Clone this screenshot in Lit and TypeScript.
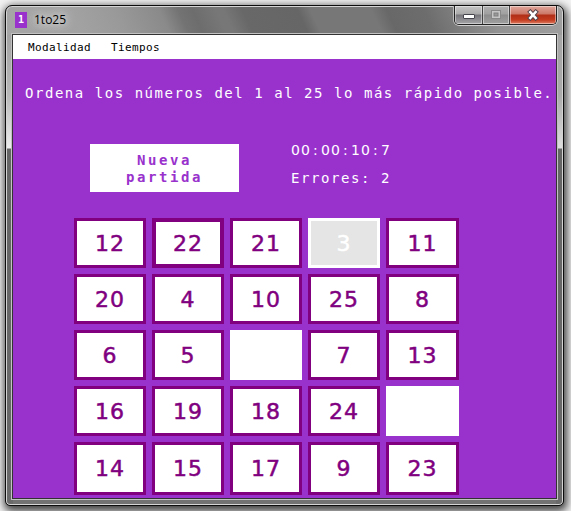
import { LitElement, html, css } from "lit";
import { customElement, property } from "lit/decorators.js";
import { classMap } from "lit/directives/class-map.js";

@customElement("number-tile")
class NumberTile extends LitElement {
  @property() value = "";
  @property() kind = "";
  static styles = css`
    :host { display: grid; }
    .tile {
      box-sizing: border-box;
      display: grid;
      place-items: center;
      background: #fff;
      border: 3px solid #800080;
      color: #800080;
      font: 22px/24px "DejaVu Sans", sans-serif;
      letter-spacing: 1px;
      padding: 1px 0 0 0;
      -webkit-text-stroke: 0.5px currentColor;
    }
    .focused { border-width: 4px; }
    .found { border-color: #fff; }
    .hover { background: #e5e5e5; border-color: #fff; color: #fff; }
  `;
  render() {
    return html`<div class=${classMap({
      tile: true,
      focused: this.kind === "focused",
      found: this.kind === "found",
      hover: this.kind === "hover",
    })}>${this.value}</div>`;
  }
}

@customElement("app-root")
class AppRoot extends LitElement {
  static styles = css`
    :host { display: block; }
    * { box-sizing: border-box; }
    .desk {
      width: 571px;
      height: 511px;
      padding: 5px 7px 5px 5px;
      overflow: hidden;
      background: #f2f2f2;
    }
    .window {
      position: relative;
      width: 559px;
      height: 501px;
      border: 1px solid #0c0c0c;
      border-radius: 7px 7px 5px 5px;
      box-shadow: inset 0 0 0 1px #d5d5d5, 1px 3px 9px 2px rgba(0, 0, 0, 0.75);
      background:
        linear-gradient(180deg, #a3a3a3 0, #b8b8b8 60px, #ededed 113px, #666 114px, #6a6a6a 100%) 0 29px / 7px 100% no-repeat,
        linear-gradient(180deg, #a5a5a5 0, #aaa 60px, #dedede 113px, #666 114px, #6a6a6a 100%) 100% 29px / 7px 100% no-repeat,
        linear-gradient(0deg, #727272 0, #727272 7px, transparent 7px),
        linear-gradient(65deg, #a6a6a6 0, #a2a2a2 70px, #999 110px, #8a8a8a 150px, #737373 167px, #6d6d6d 180px, #777 201px, #777 208px, #686868 225px, #666 275px, #777 287px, #777 342px, #686868 356px, #6d6d6d 390px, #939393 450px, #a0a0a0 100%) 0 0 / 100% 30px no-repeat,
        #777;
      padding: 1px 6px 5px;
    }
    .bar { height: 27px; display: flex; align-items: center; padding: 0 0 0 3px; }
    .logo {
      width: 12px;
      height: 16px;
      margin-top: -1px;
      background: #9932cc;
      color: #fff;
      font: bold 10px/16px "DejaVu Sans Mono", monospace;
      text-align: center;
    }
    .title {
      margin: -1px 0 0 7px;
      font: 12px/16px "Open Sans", sans-serif;
      color: #000;
      text-shadow: 0 0 6px #ddd, 0 0 10px #ddd, 0 0 12px #ddd;
    }
    .controls {
      position: absolute;
      left: 448px;
      top: 0;
      width: 103px;
      height: 19px;
      display: flex;
      border: 1px solid #222;
      border-top: 0;
      border-radius: 0 0 5px 5px;
      overflow: hidden;
      box-shadow: 0 1px 0 #d0d0d0, 1px 0 0 #d0d0d0, -1px 0 0 #bbb;
    }
    .control {
      display: grid;
      place-items: center;
      background: linear-gradient(#c4c4c4 0, #aaa 8px, #75757a 9px, #a5a5a8 100%);
      box-shadow: inset 0 0 0 1px rgba(255, 255, 255, 0.45);
      width: 28px;
      border-right: 1px solid #444;
    }
    .max { width: 27px; background: linear-gradient(#b0b0b0, #a0a0a0 8px, #8c8c8c 9px, #a0a0a0); }
    .close {
      width: 46px;
      border-right: 0;
      background: linear-gradient(#dfa79c 0, #cc7767 8px, #b02e17 9px, #c43c20 14px, #dd8065 100%);
    }
    svg { display: block; }
    .client {
      height: 465px;
      width: 545px;
      border: 1px solid #333;
      box-shadow: 0 0 0 1px #c2c2c2;
      background: #9932cc;
    }
    .menu {
      height: 24px;
      display: flex;
      gap: 20px;
      padding-left: 15px;
      background: #fff;
      color: #000;
      font: 11px/25px "DejaVu Sans Mono", monospace;
      letter-spacing: 0.38px;
    }
    .intro {
      padding: 24px 0 0 12px;
      white-space: nowrap;
      color: #fff;
      font: 14px/20px "DejaVu Sans Mono", monospace;
      letter-spacing: 1.54px;
    }
    .head { display: flex; padding: 41px 0 0 77px; gap: 52px; }
    .start {
      width: 149px;
      height: 48px;
      padding: 2px 0 0;
      border: 0;
      background: #fff;
      color: #9932cc;
      text-align: center;
      font: bold 14px/17px "DejaVu Sans Mono", monospace;
      letter-spacing: 2.57px;
    }
    .stats {
      display: grid;
      grid-template-rows: 28px 28px;
      margin-top: -8px;
      color: #fff;
      font: 14px/28px "DejaVu Sans Mono", monospace;
      letter-spacing: 1.57px;
    }
    .digits { font-family: "DejaVu Sans", sans-serif; letter-spacing: 1.09px; }
    .colon { display: inline-block; width: 10px; text-align: center; }
    .board {
      display: grid;
      grid-template-columns: repeat(4, 72px) 73px;
      grid-template-rows: repeat(4, 50px) 53px;
      gap: 6px;
      padding: 26px 0 0 61px;
    }
  `;

  private numbers = [
    "12", "22", "21", "3", "11",
    "20", "4", "10", "25", "8",
    "6", "5", "", "7", "13",
    "16", "19", "18", "24", "",
    "14", "15", "17", "9", "23",
  ];

  private kindOf(n: string) {
    if (n === "") return "found";
    if (n === "3") return "hover";
    return n === "22" ? "focused" : "";
  }

  render() {
    return html`
      <div class="desk">
        <div class="window">
          <div class="bar">
            <div class="logo">1</div>
            <div class="title">1to25</div>
          </div>
          <div class="controls">
            <div class="control">
              <svg width="14" height="12"><rect x="1.5" y="5.5" width="11" height="4" rx=".5" fill="#fff" stroke="#45454d" /></svg>
            </div>
            <div class="control max">
              <svg width="12" height="10"><rect x="1.5" y=".5" width="9" height="8" fill="#c6c6c6" stroke="#888" /><rect x="4" y="3" width="4" height="3" fill="#999" stroke="#808080" /></svg>
            </div>
            <div class="control close">
              <svg width="14" height="12"><path d="M4.3 3L9.7 9M9.7 3L4.3 9" stroke="#514249" stroke-width="4.4" stroke-linecap="square" /><path d="M4.3 3L9.7 9M9.7 3L4.3 9" stroke="#fff" stroke-width="2.6" stroke-linecap="square" /></svg>
            </div>
          </div>
          <div class="client">
            <div class="menu"><span>Modalidad</span><span>Tiempos</span></div>
            <div class="intro">Ordena los números del 1 al 25 lo más rápido posible.</div>
            <div class="head">
              <button class="start">Nueva<br />partida</button>
              <div class="stats">
                <div class="digits">00<span class="colon">:</span>00<span class="colon">:</span>10<span class="colon">:</span>7</div>
                <div>Errores: 2</div>
              </div>
            </div>
            <div class="board">
              ${this.numbers.map((n) => html`<number-tile .value=${n} .kind=${this.kindOf(n)}></number-tile>`)}
            </div>
          </div>
        </div>
      </div>
    `;
  }
}
